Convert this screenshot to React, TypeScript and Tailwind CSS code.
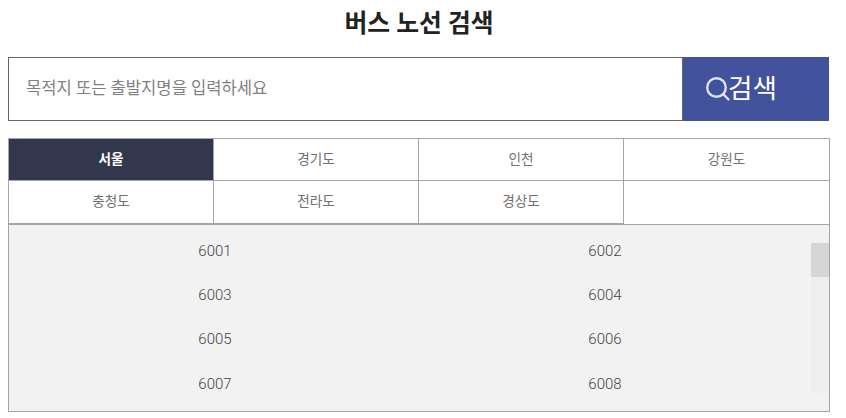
const font = "font-['Roboto','Noto_Sans_CJK_KR',sans-serif]"

const regions = ["서울", "경기도", "인천", "강원도", "충청도", "전라도", "경상도", ""]
const routes = ["6001", "6002", "6003", "6004", "6005", "6006", "6007", "6008"]

function SearchIcon() {
  return (
    <svg width="24" height="24" viewBox="0 0 24 24" fill="none" stroke="#dfe3f0" strokeWidth="2.4" strokeLinecap="round">
      <circle cx="10.5" cy="10.5" r="9.3" />
      <path d="M17.2 17.2l5.3 5.3" />
    </svg>
  )
}

export default function App() {
  return (
    <div className={`${font} h-[418px] w-[846px] overflow-hidden bg-white pl-2 pr-4`}>
      <h1 className="h-[57px] pt-[7px] text-center text-[24.8px] leading-[34px] font-bold text-[#222]">버스 노선 검색</h1>

      <div className="flex h-16 w-[821px] border border-[#666] border-r-0">
        <div className="flex flex-1 items-center pl-[17px] text-[16.6px] text-[#808080]">목적지 또는 출발지명을 입력하세요</div>
        <button className="-my-px flex h-16 w-[147px] items-center border-l border-[#666] bg-[#43529d] pl-[23px] text-[26.6px] text-white">
          <SearchIcon />
          <span className="-ml-0.5">검색</span>
        </button>
      </div>

      <div className="mt-[17px] w-[822px] border border-[#a5a5a5]">
        <div className="grid grid-cols-[205px_205px_205px_1fr]">
          {regions.map((r, i) => (
            <div
              key={i}
              className={`flex items-center justify-center border-[#a5a5a5] text-[13.6px] ${i < 4 ? "h-[42px] border-b pb-px" : "h-[44px] pb-0.5"} ${i % 4 !== 3 ? "border-r" : ""} ${i > 3 && i < 7 ? "border-b-2" : ""} ${i === 7 ? "border-b" : ""} ${i === 0 ? "bg-[#33374d] font-bold text-white" : "text-[#707070]"}`}
            >
              {r}
            </div>
          ))}
        </div>
        <div className="relative h-[186px] bg-[#f2f2f2]">
          <div className="grid grid-cols-[390px_390px] pt-[4px] pl-[11px]">
            {routes.map((n) => (
              <div key={n} className="flex h-[44.3px] items-center justify-center text-[15px] font-light text-[#444]">
                {n}
              </div>
            ))}
          </div>
          <div className="absolute top-[18px] right-0 h-[150px] w-[18px] bg-[#eeeeee]">
            <div className="h-[34px] bg-[#d6d6d6]" />
          </div>
        </div>
      </div>
    </div>
  )
}
